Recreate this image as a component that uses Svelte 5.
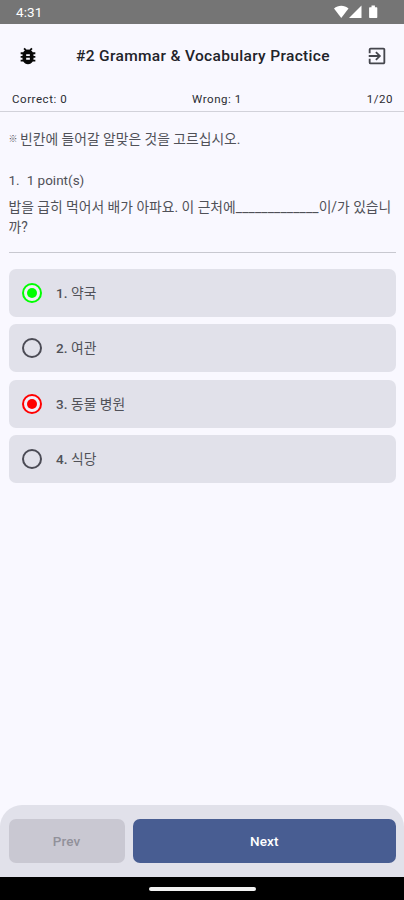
<script lang="ts">
  type Option = { id: number; label: string; state: 'idle' | 'correct' | 'wrong' }

  const options: Option[] = [
    { id: 1, label: '약국', state: 'correct' },
    { id: 2, label: '여관', state: 'idle' },
    { id: 3, label: '동물 병원', state: 'wrong' },
    { id: 4, label: '식당', state: 'idle' },
  ]

  let correct = $state(0)
  let wrong = $state(1)
  let current = $state(1)
  const total = 20
</script>

<div class="screen">
  <div class="status-bar">
    <span class="clock">4:31</span>
    <svg class="signals" viewBox="0 0 44 14" width="44" height="14" fill="#fff" aria-hidden="true">
      <path d="M0 3.4C4.2-.1 10.3-.1 14.5 3.4L7.25 13z" />
      <path d="M27.5.5V13H15z" />
      <path d="M35.8 2.2h1.7V.6h3.4v1.6h1.7a.7.7 0 0 1 .7.7v9.4a.7.7 0 0 1-.7.7h-6.8a.7.7 0 0 1-.7-.7V2.9a.7.7 0 0 1 .7-.7z" />
    </svg>
  </div>

  <header class="app-bar">
    <button class="icon-btn" aria-label="Report a bug">
      <svg viewBox="0 0 24 24" width="22" height="22" fill="#080808">
        <path fill-rule="evenodd" d="M20 8h-2.81a5.985 5.985 0 0 0-1.82-1.96L17 4.41 15.59 3l-2.17 2.17a6.002 6.002 0 0 0-2.84 0L8.41 3 7 4.41l1.62 1.63C7.88 6.55 7.26 7.22 6.81 8H4v2h2.09c-.05.33-.09.66-.09 1v1H4v2h2v1c0 .34.04.67.09 1H4v2h2.81c1.04 1.79 2.97 3 5.19 3s4.15-1.21 5.19-3H20v-2h-2.09c.05-.33.09-.66.09-1v-1h2v-2h-2v-1c0-.34-.04-.67-.09-1H20V8zm-6 8h-4v-2h4v2zm0-4h-4v-2h4v2z" />
      </svg>
    </button>
    <h1>#2 Grammar &amp; Vocabulary Practice</h1>
    <button class="icon-btn" aria-label="Exit">
      <svg viewBox="0 0 24 24" width="22" height="22" fill="#45464d">
        <path d="M10.09 15.59 11.5 17l5-5-5-5-1.41 1.41L12.67 11H3v2h9.67l-2.58 2.59zM19 3H5a2 2 0 0 0-2 2v4h2V5h14v14H5v-4H3v4a2 2 0 0 0 2 2h14c1.1 0 2-.9 2-2V5c0-1.1-.9-2-2-2z" />
      </svg>
    </button>
  </header>

  <div class="stats">
    <span>Correct: {correct}</span>
    <span>Wrong: {wrong}</span>
    <span>{current}/{total}</span>
  </div>

  <main>
    <p class="instruction"><span class="mark">※</span>빈칸에 들어갈 알맞은 것을 고르십시오.</p>
    <p class="points"><span>{current}.</span><span>1 point(s)</span></p>
    <p class="question">밥을 급히 먹어서 배가 아파요. 이 근처에<span class="blank">_____________</span>이/가 있습니까?</p>

    <ul class="options">
      {#each options as option (option.id)}
        <li class={option.state}>
          <span class="radio"></span>
          <span class="num">{option.id}.</span>
          <span class="label">{option.label}</span>
        </li>
      {/each}
    </ul>
  </main>

  <footer>
    <button class="prev" disabled>Prev</button>
    <button class="next">Next</button>
  </footer>
  <div class="nav-bar"><span></span></div>
</div>

<style>
  :global(body) { background: #f9f8ff; }
  .screen {
    display: flex; flex-direction: column; width: 404px; height: 900px; overflow: hidden;
    box-sizing: border-box; background: #f9f8ff; color: #505158;
    font-family: Roboto, 'Noto Sans CJK KR', sans-serif;
  }
  button { border: 0; padding: 0; font: inherit; }
  .status-bar {
    display: flex; justify-content: space-between; align-items: center;
    height: 24px; padding: 0 26px 0 16px; box-sizing: border-box; background: #757575; color: #fff;
  }
  .clock { font-size: 13.5px; letter-spacing: 0.1px; }
  .signals { display: block; }
  .app-bar {
    display: flex; align-items: center; justify-content: space-between;
    height: 64px; padding: 0 16px 0 17px; box-sizing: border-box;
  }
  .icon-btn { display: flex; background: none; }
  h1 { margin: 0 0 0 1px; font-size: 15.5px; font-weight: 500; letter-spacing: 0.33px; color: #222329; white-space: nowrap; }
  .stats {
    display: flex; align-items: center; justify-content: space-between;
    height: 24px; padding: 0 11px 1px 12px; box-sizing: border-box;
    border-bottom: 1px solid #d2d2da; font-size: 11.5px; letter-spacing: 0.55px; color: #2b2c32;
  }
  main { flex: 1; padding: 16px 8px 0 8.5px; }
  p { margin: 0; font-size: 13.8px; line-height: 20px; }
  .instruction { display: flex; padding-top: 1px; }
  .mark { width: 11.5px; font-size: 9px; }
  .points { display: flex; gap: 7px; margin-top: 21px; font-size: 13.5px; }
  .question { margin-top: 7px; padding-bottom: 15px; border-bottom: 1px solid #c8c8d0; word-break: break-all; }
  .blank { letter-spacing: 0.15px; }
  .options { display: flex; flex-direction: column; gap: 7.5px; margin: 15.7px 0 0; padding: 0; list-style: none; }
  li {
    display: flex; align-items: center; height: 48px; padding-left: 13.5px;
    box-sizing: border-box; border-radius: 7px; background: #e1e1ea; font-size: 13.8px;
  }
  .radio {
    display: flex; align-items: center; justify-content: center; width: 20px; height: 20px;
    box-sizing: border-box; border: 2px solid #4b4b55; border-radius: 50%;
  }
  .radio::after { content: ''; width: 10px; height: 10px; border-radius: 50%; }
  .correct .radio { border-color: #0f0; background: #f2eef8; }
  .correct .radio::after { background: #0f0; }
  .wrong .radio { border-color: #f00; background: #f2eef8; }
  .wrong .radio::after { background: #f00; }
  .num { width: 15px; margin-left: 14px; font-size: 13.5px; font-weight: 500; }
  .label { padding-bottom: 2px; }
  footer {
    display: flex; gap: 8px; height: 72px; padding: 14px 8px 14px 8.5px;
    box-sizing: border-box; border-radius: 22px 22px 0 0; background: #e1e1ea;
  }
  footer button { border-radius: 7px; font-size: 13.5px; font-weight: 500; letter-spacing: 0.1px; }
  .prev { width: 116px; background: #c9c8d2; color: #91919a; }
  .next { flex: 1; background: #485d92; color: #fff; }
  .nav-bar { display: flex; align-items: center; justify-content: center; height: 23px; background: #000; }
  .nav-bar span { width: 107px; height: 4px; border-radius: 2px; background: #f2f2f2; }
</style>
